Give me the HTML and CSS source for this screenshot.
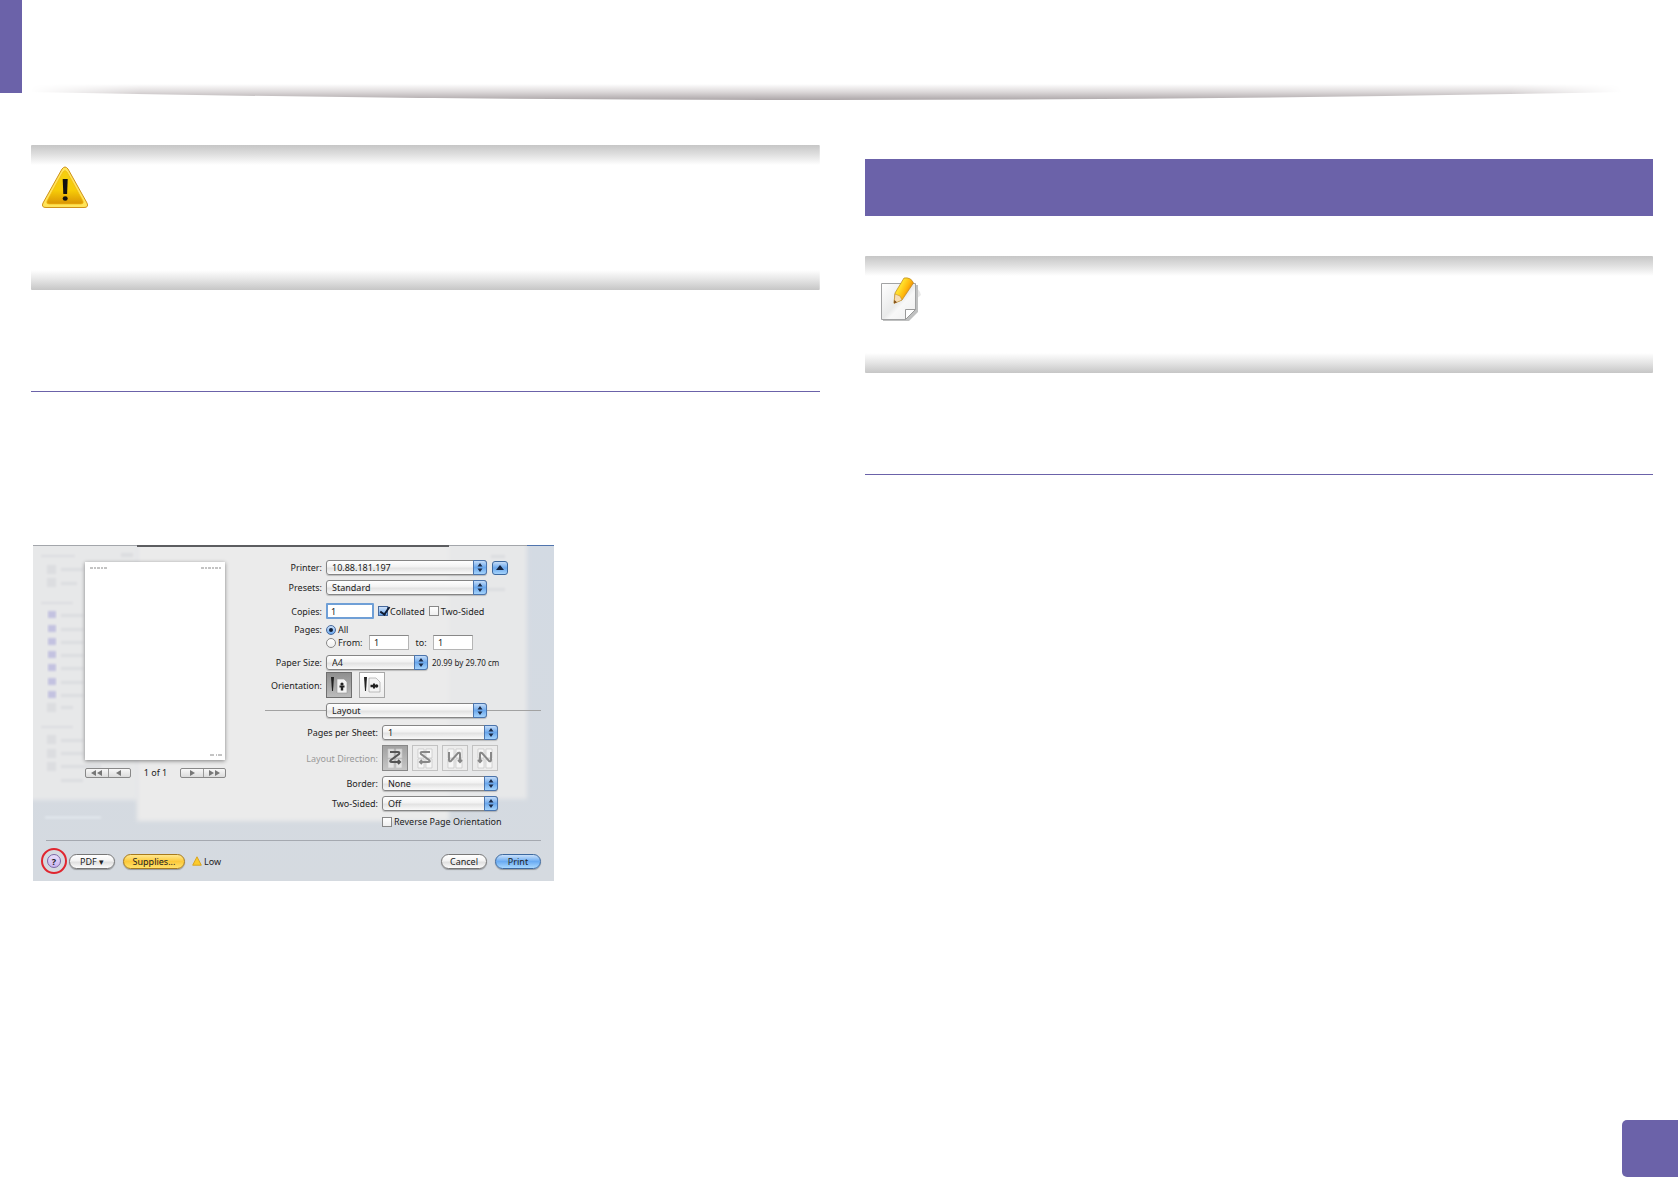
FILE: index.html
```html
<!DOCTYPE html>
<html lang="en">
<head>
    <meta charset="UTF-8">
    <meta name="viewport" content="width=device-width, initial-scale=1.0">
    <title>Using help</title>
    <link rel="stylesheet" href="styles.css">
</head>
<body>
    <!-- shared shapes -->
    <svg class="defs" width="0" height="0" aria-hidden="true">
        <symbol id="arrows" viewBox="0 0 12 13">
            <path d="M6 2 L8.500 5.500 H3.500 Z M6 11 L8.500 7.500 H3.500 Z" fill="#1b2b48"/>
        </symbol>
        <symbol id="sheet" viewBox="0 0 24 24">
            <path d="M5 3h6v9H5zM13 3h6v9h-6zM5 13h6v9H5zM13 13h6v9h-6z" fill="#fff" fill-opacity="0.6" stroke="#c4c4c4" stroke-width="0.7"/>
        </symbol>
    </svg>

    <header class="page-header">
        <div class="tab"></div>
        <svg class="swoosh" viewBox="0 0 1678 100" preserveAspectRatio="none" aria-hidden="true">
            <defs>
                <linearGradient id="swooshFill" x1="0" y1="84" x2="0" y2="100" gradientUnits="userSpaceOnUse">
                    <stop offset="0" stop-color="#fff"/>
                    <stop offset="0.5" stop-color="#dcd8d9"/>
                    <stop offset="1" stop-color="#aca6a8"/>
                </linearGradient>
                <linearGradient id="swooshFade" x1="30" y1="0" x2="1622" y2="0" gradientUnits="userSpaceOnUse">
                    <stop offset="0" stop-color="#000"/>
                    <stop offset="0.07" stop-color="#fff"/>
                    <stop offset="0.93" stop-color="#fff"/>
                    <stop offset="1" stop-color="#000"/>
                </linearGradient>
                <mask id="swooshMask" maskUnits="userSpaceOnUse" x="0" y="0" width="1678" height="100">
                    <rect width="1678" height="100" fill="url(#swooshFade)"/>
                </mask>
            </defs>
            <path d="M30 84 H1622 V92 Q826 108 30 92 Z" fill="url(#swooshFill)" mask="url(#swooshMask)"/>
        </svg>
    </header>

    <main class="columns">
        <section class="column">
            <div class="notice notice-caution">
                <svg width="48" height="44" viewBox="0 0 48 44" role="img" aria-label="Caution">
                    <defs>
                        <linearGradient id="cautionFill" x1="0" y1="0" x2="0" y2="1">
                            <stop offset="0" stop-color="#f5cf10"/>
                            <stop offset="0.6" stop-color="#f6cb07"/>
                            <stop offset="1" stop-color="#d99405"/>
                        </linearGradient>
                    </defs>
                    <path d="M21 3 Q24 -1 27 3 L46 37 Q48 41.500 43 41.500 H5 Q0 41.500 2 37 Z" fill="#ffe45a" stroke="#cf9218"/>
                    <path d="M22 6 Q24 3 26 6 L42 35 Q43 38 40 38 H8 Q5 38 6 35 Z" fill="url(#cautionFill)" stroke="#f2b90f" stroke-width="0.7"/>
                    <path d="M21.700 13h5l-.6 15h-3.800z" fill="#111"/>
                    <ellipse cx="24.200" cy="32.500" rx="2.500" ry="2.200" fill="#111"/>
                </svg>
            </div>
            <hr class="rule">

            <form class="dialog">
                <!-- windows showing through behind the print sheet -->
                <svg class="backdrop" viewBox="0 0 521 336" preserveAspectRatio="none" aria-hidden="true">
                    <defs>
                        <linearGradient id="desk" x1="0" y1="0" x2="0" y2="1">
                            <stop offset="0" stop-color="#d3dae3"/>
                            <stop offset="1" stop-color="#d5dae0"/>
                        </linearGradient>
                        <filter id="soft"><feGaussianBlur stdDeviation="2"/></filter>
                        <filter id="haze"><feGaussianBlur stdDeviation="1"/></filter>
                    </defs>
                    <rect width="521" height="336" fill="url(#desk)"/>
                    <rect x="-10" y="-10" width="115" height="265" fill="#e7e8e9" filter="url(#soft)"/>
                    <rect x="400" y="-10" width="94" height="264" fill="#e7e8e9" filter="url(#soft)"/>
                    <rect x="104" y="-10" width="312" height="286" fill="#ebebeb" filter="url(#soft)"/>
                    <g fill="#dcdde0" filter="url(#haze)">
                        <path d="M8 10h34v2H8zM88 8h12v4H88zM28 23h22v3H28zM28 37h16v3H28zM8 57h32v2H8zM8 181h32v2H8z"/>
                        <path d="M28 69h22v3H28zM28 83h22v3H28zM28 96h22v3H28zM28 109h22v3H28zM28 122h22v3H28zM28 136h22v3H28zM28 149h22v3H28zM28 161h12v3H28z"/>
                        <path d="M28 194h22v3H28zM28 207h22v3H28zM28 220h40v3H28zM28 234h22v3H28z"/>
                        <path d="M14 20h9v9h-9zM14 33h9v9h-9zM14 190h9v9h-9zM14 204h9v9h-9zM14 217h9v9h-9zM14 158h9v9h-9z"/>
                        <path d="M458 10h14v3h-14zM452 43h20v3h-20z"/>
                    </g>
                    <path d="M12 271h56v3H12z" fill="#dfe4ea" filter="url(#haze)"/>
                    <g fill="#c3c2e0" filter="url(#haze)">
                        <path d="M15 66h8v7h-8zM15 80h8v7h-8zM15 93h8v7h-8zM15 106h8v7h-8zM15 119h8v7h-8zM15 133h8v7h-8zM15 146h8v7h-8z"/>
                    </g>
                    <path d="M0 0h521v1H0z" fill="#a3a6ab"/>
                    <path d="M104 0h312v2H104z" fill="#5c5d60"/>
                    <path d="M494 0h27v1h-27z" fill="#5074ad"/>
                </svg>

                <div class="panes">
                    <div class="preview">
                        <svg class="paper" viewBox="0 0 140 198" role="img" aria-label="Page preview">
                            <path d="M5 6h17M116 6h20" stroke="#888" stroke-dasharray="3 1 2 1"/>
                            <path d="M125 193h12" stroke="#888" stroke-dasharray="4 2 1 1"/>
                        </svg>
                        <div class="pager">
                            <div class="pager-group">
                                <button type="button" aria-label="First page"><svg width="12" height="6" viewBox="0 0 12 6"><path d="M5 0v6L0 3zM11 0v6L6 3z"/></svg></button>
                                <button type="button" aria-label="Previous page"><svg width="6" height="6" viewBox="0 0 6 6"><path d="M5 0v6L0 3z"/></svg></button>
                            </div>
                            <span>1 of 1</span>
                            <div class="pager-group">
                                <button type="button" aria-label="Next page"><svg width="6" height="6" viewBox="0 0 6 6"><path d="M1 0v6l5-3z"/></svg></button>
                                <button type="button" aria-label="Last page"><svg width="12" height="6" viewBox="0 0 12 6"><path d="M1 0v6l5-3zM7 0v6l5-3z"/></svg></button>
                            </div>
                        </div>
                    </div>

                    <div class="settings">
                        <div class="row">
                            <label class="name" for="printer">Printer:</label>
                            <span class="select wide"><select id="printer"><option>10.88.181.197</option></select><svg><use href="#arrows"/></svg></span>
                            <button type="button" class="expand" aria-label="Hide details"><svg width="8" height="5" viewBox="0 0 8 5"><path d="M4 0l4 5H0z" fill="#14233f"/></svg></button>
                        </div>
                        <div class="row spaced">
                            <label class="name" for="presets">Presets:</label>
                            <span class="select wide"><select id="presets"><option>Standard</option></select><svg><use href="#arrows"/></svg></span>
                        </div>
                        <div class="row copies">
                            <label class="name" for="copies">Copies:</label>
                            <input type="text" id="copies" class="focused" value="1">
                            <label class="option"><input type="checkbox" checked>Collated</label>
                            <label class="option"><input type="checkbox">Two-Sided</label>
                        </div>
                        <div class="row spaced short">
                            <span class="name">Pages:</span>
                            <label class="option"><input type="radio" name="pages" checked>All</label>
                        </div>
                        <div class="row range">
                            <span class="name"></span>
                            <label class="option"><input type="radio" name="pages">From:</label>
                            <input type="text" aria-label="From page" value="1">
                            <label class="to" for="pageTo">to:</label>
                            <input type="text" id="pageTo" value="1">
                        </div>
                        <div class="row spaced">
                            <label class="name" for="paperSize">Paper Size:</label>
                            <span class="select narrow"><select id="paperSize"><option>A4</option></select><svg><use href="#arrows"/></svg></span>
                            <small>20.99 by 29.70 cm</small>
                        </div>
                        <div class="row orientation">
                            <span class="name">Orientation:</span>
                            <button type="button" class="tile pressed" aria-label="Portrait">
                                <svg viewBox="0 0 24 24"><path d="M10 6h7l3 3v11H10z" fill="#f4f4f4" stroke="#999" stroke-width="0.6"/><path d="M4 4h3l-1 14H5z" fill="#222"/><circle cx="15" cy="11" r="1.600" fill="#222"/><path d="M12.500 12.500h5v2h-1.300v3h-2.400v-3h-1.300z" fill="#222"/></svg>
                            </button>
                            <button type="button" class="tile" aria-label="Landscape">
                                <svg viewBox="0 0 24 24"><path d="M9 5h7l4 4v10H9z" fill="#f4f4f4" stroke="#999" stroke-width="0.6"/><path d="M4 4h3l-1 14H5z" fill="#222"/><circle cx="16.500" cy="13" r="1.800" fill="#222"/><path d="M15 10.500v5h-2v-1.300h-2.500v-2.400h2.500v-1.300z" fill="#222"/></svg>
                            </button>
                        </div>
                        <div class="row divided">
                            <span class="select wide"><select aria-label="Options"><option>Layout</option></select><svg><use href="#arrows"/></svg></span>
                        </div>

                        <div class="layout-options">
                            <div class="row">
                                <label class="name" for="perSheet">Pages per Sheet:</label>
                                <span class="select"><select id="perSheet"><option>1</option></select><svg><use href="#arrows"/></svg></span>
                            </div>
                            <div class="row spaced directions">
                                <span class="name disabled">Layout Direction:</span>
                                <button type="button" class="tile pressed" aria-label="Across then down"><svg viewBox="0 0 24 24"><use href="#sheet"/><path d="M7 6h8q2 0 1 2L8 14q-2 2 1 2h8M15 14l2 2-2 2" class="stroke"/></svg></button>
                                <button type="button" class="tile" aria-label="Across from right"><svg viewBox="0 0 24 24"><use href="#sheet"/><path d="M17 6H9q-2 0-1 2l8 6q2 2-1 2H7M9 14l-2 2 2 2" class="stroke"/></svg></button>
                                <button type="button" class="tile" aria-label="Down then right"><svg viewBox="0 0 24 24"><use href="#sheet"/><path d="M6 6v8q0 2 2 1l7-8q2-1 2 1v8M15 14l2 2 2-2" class="stroke"/></svg></button>
                                <button type="button" class="tile" aria-label="Down then left"><svg viewBox="0 0 24 24"><use href="#sheet"/><path d="M18 6v8q0 2-2 1L9 7q-2-1-2 1v8M5 14l2 2 2-2" class="stroke"/></svg></button>
                            </div>
                            <div class="row spaced">
                                <label class="name" for="border">Border:</label>
                                <span class="select"><select id="border"><option>None</option></select><svg><use href="#arrows"/></svg></span>
                            </div>
                            <div class="row spaced">
                                <label class="name" for="twoSided">Two-Sided:</label>
                                <span class="select"><select id="twoSided"><option>Off</option></select><svg><use href="#arrows"/></svg></span>
                            </div>
                            <div class="row spaced short">
                                <span class="name"></span>
                                <label class="option"><input type="checkbox">Reverse Page Orientation</label>
                            </div>
                        </div>
                    </div>
                </div>

                <div class="actions">
                    <span class="help-ring"><button type="button" class="help">?</button></span>
                    <button type="button" class="pill pdf">PDF ▾</button>
                    <button type="button" class="pill supplies">Supplies...</button>
                    <span class="level"><svg width="10" height="10" viewBox="0 0 10 10" aria-hidden="true"><path d="M5 .8l4.300 8.400H.7z" fill="#fccb2c" stroke="#d9a520" stroke-linejoin="round"/></svg>Low</span>
                    <button type="button" class="pill cancel">Cancel</button>
                    <button type="submit" class="pill print">Print</button>
                </div>
            </form>
        </section>

        <section class="column">
            <div class="banner"></div>
            <div class="notice notice-note">
                <svg width="42" height="46" viewBox="0 0 42 46" role="img" aria-label="Note">
                    <defs>
                        <linearGradient id="noteFill" x1="0" y1="0" x2="1" y2="1">
                            <stop offset="0" stop-color="#fff"/>
                            <stop offset="0.5" stop-color="#e9eaea"/>
                            <stop offset="0.6" stop-color="#f8f8f8"/>
                            <stop offset="1" stop-color="#eee"/>
                        </linearGradient>
                        <linearGradient id="pencilFill" x1="0.2" y1="0.3" x2="0.8" y2="0.7">
                            <stop offset="0.2" stop-color="#ffdf2c"/>
                            <stop offset="0.6" stop-color="#ffb80c"/>
                            <stop offset="1" stop-color="#e87c08"/>
                        </linearGradient>
                    </defs>
                    <path d="M17 29 Q31 28 41 18 Q40 12 33 10 Z" fill="#e9e9e9"/>
                    <path d="M3 8h35v27l-9 9H3z" fill="#bfc0c0"/>
                    <path d="M1.500 6.500h34v26l-10 10h-24z" fill="url(#noteFill)" stroke="#a2a3a4"/>
                    <path d="M25.500 42.500v-10h10z" fill="#fff" stroke="#999"/>
                    <path d="M24 1 Q31 0 33.500 6 L22 23 14 26 15 16 Z" fill="url(#pencilFill)" stroke="#b98624" stroke-width="0.7"/>
                    <path d="M15 17l-1 9.500 8-3.500-2-4z" fill="#f7ddb5" stroke="#b98624" stroke-width="0.5"/>
                    <path d="M14.300 23l-.3 3.500 3-1.300z" fill="#7c4a16"/>
                </svg>
            </div>
            <hr class="rule">
        </section>
    </main>

    <footer class="page-number"></footer>
</body>
</html>
```

FILE: styles.css
```css
* {
    box-sizing: border-box;
}
body {
    margin: 0;
    min-height: 100vh;
    display: flex;
    flex-direction: column;
    background-color: #fff;
    font-family: "Noto Sans", "Open Sans", sans-serif;
    color: #222;
}
.defs {
    position: absolute;
}
.page-header {
    position: relative;
    height: 100px;
}
.tab {
    width: 22px;
    height: 93px;
    background-color: #6b62a9;
}
.swoosh {
    position: absolute;
    top: 0;
    left: 0;
    width: 100%;
    height: 100px;
}
.columns {
    display: grid;
    grid-template-columns: 1fr 1fr;
    gap: 45px;
    padding: 45px 25px 40px 31px;
}
.notice {
    padding: 21px 11px;
    border-radius: 1px;
    background-image: linear-gradient(#c6c6c6, #dedede 9px, #fff 20px), linear-gradient(#fff, #e4e4e4 10px, #c6c6c6 20px);
    background-size: 100% 20px, 100% 20px;
    background-position: top, bottom;
    background-repeat: no-repeat;
}
.notice svg {
    display: block;
}
.notice-caution {
    min-height: 145px;
    padding-left: 10px;
}
.notice-note {
    min-height: 117px;
    margin-top: 40px;
    padding-left: 15px;
}
.rule {
    margin: 101px 0 0;
    border: 0;
    height: 1px;
    background-color: #6b62a9;
}
.banner {
    height: 57px;
    margin-top: 14px;
    background-color: #6b62a9;
}
.page-number {
    width: 56px;
    height: 57px;
    margin: auto 0 1px auto;
    border-radius: 5px 0 0 5px;
    background-color: #6b62a9;
}

/* print dialog */
.dialog {
    position: relative;
    max-width: 521px;
    margin: 153px 0 0 2px;
    padding: 15px 13px 7px;
    font-size: 9px;
    line-height: 11px;
}
.backdrop {
    position: absolute;
    top: 0;
    left: 0;
    width: 100%;
    height: 100%;
}
.dialog button,
.dialog input,
.dialog select {
    font: inherit;
    color: inherit;
    margin: 0;
    padding: 0;
}
.panes {
    position: relative;
    display: flex;
    justify-content: space-between;
    padding-bottom: 13px;
    border-bottom: 1px solid #a5a9b0;
}
.preview {
    width: 141px;
    margin: 2px 0 0 39px;
}
.paper {
    display: block;
    width: 140px;
    height: 198px;
    background-color: #fff;
    box-shadow: 0 1px 4px rgba(0, 0, 0, 0.45);
}
.pager {
    display: flex;
    align-items: center;
    justify-content: space-between;
    margin-top: 7px;
}
.pager-group {
    display: flex;
    width: 46px;
    height: 10px;
    border: 1px solid #888;
    border-radius: 2px;
    background: linear-gradient(#f8f8f8, #dcdcdc);
}
.pager-group button {
    flex: 1;
    display: flex;
    align-items: center;
    justify-content: center;
    border: 0;
    background: none;
}
.pager-group button + button {
    border-left: 1px solid #999;
}
.pager-group path {
    fill: #777;
}
.settings {
    width: 276px;
}
.row {
    display: flex;
    align-items: center;
    height: 15px;
}
.spaced {
    margin-top: 5px;
}
.short {
    height: 11px;
}
.name {
    width: 57px;
    margin-right: 4px;
    text-align: right;
    white-space: nowrap;
    flex-shrink: 0;
}
.layout-options {
    margin-top: 7px;
}
.layout-options .name {
    width: 113px;
}
.disabled {
    color: #999;
}
.select {
    position: relative;
    width: 116px;
    height: 15px;
}
.select.wide {
    width: 161px;
}
.select.narrow {
    width: 102px;
}
.select select {
    display: block;
    width: 100%;
    height: 15px;
    padding: 0 16px 0 5px;
    appearance: none;
    border: 1px solid #858585;
    border-radius: 3px;
    background: linear-gradient(#fff, #f2f2f2 45%, #e2e2e2 55%, #fafafa);
    box-shadow: 0 1px 1px rgba(0, 0, 0, 0.2);
}
.select svg {
    position: absolute;
    top: 0;
    right: 0;
    width: 14px;
    height: 15px;
    border: 1px solid #4a74ad;
    border-radius: 0 3px 3px 0;
    background: linear-gradient(#c4dcf8, #6aa7ec 50%, #a5d3fb);
    pointer-events: none;
}
.expand {
    display: flex;
    align-items: center;
    justify-content: center;
    width: 16px;
    height: 14px;
    border: 1px solid #3d699f;
    border-radius: 3px;
    background: linear-gradient(#c4dcf8, #6aa7ec 50%, #a5d3fb);
}
.dialog .expand {
    margin-left: 5px;
}
.dialog input[type="text"] {
    width: 40px;
    height: 15px;
    padding: 0 4px;
    border: 1px solid #b5b5b5;
    border-top-color: #888;
    background-color: #fff;
}
.dialog input.focused {
    width: 48px;
    height: 16px;
    border: 2px solid #6f9fd6;
    border-radius: 1px;
    padding: 0 3px;
}
.copies {
    height: 16px;
    margin-top: 8px;
}
.copies .option {
    margin-left: 4px;
}
.option {
    display: flex;
    align-items: center;
    gap: 2px;
    white-space: nowrap;
}
.dialog input[type="checkbox"],
.dialog input[type="radio"] {
    appearance: none;
    position: relative;
    width: 10px;
    height: 10px;
    flex-shrink: 0;
    border: 1px solid #888;
    background: linear-gradient(#fff, #efefef);
}
.dialog input[type="radio"] {
    border-radius: 50%;
}
.dialog input:checked {
    border-color: #47699c;
    background: linear-gradient(#cfe2fa, #6aa7ec);
}
.dialog input[type="checkbox"]:checked::after {
    content: "";
    position: absolute;
    left: 3px;
    top: -2px;
    width: 4px;
    height: 8px;
    border: solid #101c33;
    border-width: 0 2px 2px 0;
    transform: rotate(35deg);
}
.dialog input[type="radio"]:checked::after {
    content: "";
    position: absolute;
    left: 2px;
    top: 2px;
    width: 4px;
    height: 4px;
    border-radius: 50%;
    background-color: #101c33;
}
.range .option {
    width: 43px;
}
.range .to {
    width: 24px;
    text-align: center;
}
.dialog small {
    margin-left: 4px;
    font-size: 8px;
    white-space: nowrap;
}
.orientation {
    height: 26px;
    margin-top: 2px;
}
.tile {
    width: 26px;
    height: 26px;
    border: 1px solid #a8a8a8;
    background: linear-gradient(#fff, #ededed);
}
.tile svg {
    display: block;
    width: 24px;
    height: 24px;
}
.tile.pressed {
    border-color: #6f6f6f;
    background: linear-gradient(#8f8f8f, #bcbcbc);
}
.orientation .tile + .tile {
    margin-left: 7px;
}
.directions {
    height: 26px;
}
.directions .tile {
    border-color: #c2c2c2;
    background: #ececec;
}
.directions .tile.pressed {
    border-color: #888;
    background: linear-gradient(#a2a2a2, #c6c6c6);
}
.directions .tile + .tile {
    margin-left: 4px;
}
.stroke {
    fill: none;
    stroke: #888;
    stroke-width: 2;
}
.pressed .stroke {
    stroke: #555;
}
.divided {
    margin-top: 5px;
}
.divided::before,
.divided::after {
    content: "";
    width: 61px;
    height: 1px;
    background-color: #a2a2a2;
}
.divided::after {
    flex: 1;
}
.actions {
    position: relative;
    display: flex;
    align-items: center;
    height: 26px;
    margin: 7px 0 0 -5px;
}
.help-ring {
    display: flex;
    align-items: center;
    justify-content: center;
    width: 26px;
    height: 26px;
    border: 2px solid #e0262f;
    border-radius: 50%;
}
.help {
    width: 14px;
    height: 14px;
    border: 1px solid #7b68a6;
    border-radius: 50%;
    background: linear-gradient(#e9dffb, #c9b5ee);
}
.dialog .help {
    font-weight: bold;
}
.pill {
    width: 46px;
    height: 15px;
    border: 1px solid #777;
    border-radius: 8px;
    background: linear-gradient(#fff, #f3f3f3 45%, #e0e0e0 55%, #fbfbfb);
    box-shadow: 0 1px 1px rgba(0, 0, 0, 0.3);
}
.dialog .pdf {
    margin-left: 2px;
}
.dialog .supplies {
    width: 62px;
    margin-left: 8px;
    border-color: #a87a1c;
    background: linear-gradient(#ffe88f, #fcc93a 50%, #ffe16a);
}
.level {
    display: flex;
    align-items: center;
    gap: 2px;
    margin-left: 7px;
}
.dialog .cancel {
    margin-left: auto;
}
.dialog .print {
    margin-left: 8px;
    border-color: #3d699f;
    background: linear-gradient(#c9e0fa, #6aabf2 50%, #a8d8ff);
}
```
